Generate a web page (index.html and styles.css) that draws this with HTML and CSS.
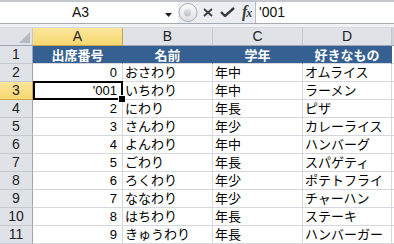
FILE: index.html
```html
<!DOCTYPE html>
<html lang="ja">
<head>
<meta charset="utf-8">
<title>Excel</title>
<link rel="stylesheet" href="styles.css">
</head>
<body>
<div class="app">
  <div class="fbar">
    <div class="namebox">
      <span class="name">A3</span>
      <svg class="dd" width="7" height="4" viewBox="0 0 7 4"><path d="M0 0H7L3.5 4Z" fill="#222"/></svg>
    </div>
    <div class="fbtns">
      <svg class="knob" width="20" height="21" viewBox="0 0 20 21">
        <defs>
          <linearGradient id="kg" x1="0" y1="0" x2="0" y2="1">
            <stop offset="0" stop-color="#fbfbfc"/>
            <stop offset="1" stop-color="#dde0e4"/>
          </linearGradient>
          <linearGradient id="ig" x1="0" y1="0" x2="0" y2="1">
            <stop offset="0" stop-color="#e4e6e9"/>
            <stop offset="1" stop-color="#b9bec5"/>
          </linearGradient>
        </defs>
        <circle cx="10" cy="10.5" r="9" fill="url(#kg)" stroke="#a9aeb5" stroke-width="1"/>
        <ellipse cx="9.5" cy="10.5" rx="3.5" ry="4" fill="url(#ig)"/>
      </svg>
      <svg class="ico" width="10" height="9" viewBox="0 0 10 9"><path d="M1 1L9 8M9 1L1 8" stroke="#3c3c3c" stroke-width="1.8"/></svg>
      <svg class="ico chk" width="15" height="10" viewBox="0 0 15 10"><path d="M1 5L5 9L14 1" fill="none" stroke="#3c3c3c" stroke-width="2.4"/></svg>
      <span class="fx">f<span class="fxx">x</span></span>
    </div>
    <div class="finput">'001</div>
  </div>
  <div class="gap"></div>
  <div class="sheet">
    <div class="corner"></div>
    <div class="ch sel">A</div>
    <div class="ch">B</div>
    <div class="ch">C</div>
    <div class="ch">D</div>
    <div class="ch end"></div>

    <div class="rh">1</div>
    <div class="c hd">出席番号</div>
    <div class="c hd">名前</div>
    <div class="c hd">学年</div>
    <div class="c hd">好きなもの</div>
    <div class="c end"></div>

    <div class="rh">2</div>
    <div class="c num">0</div>
    <div class="c">おさわり</div>
    <div class="c">年中</div>
    <div class="c">オムライス</div>
    <div class="c end"></div>

    <div class="rh sel">3</div>
    <div class="c num active">'001</div>
    <div class="c">いちわり</div>
    <div class="c">年中</div>
    <div class="c">ラーメン</div>
    <div class="c end"></div>

    <div class="rh">4</div>
    <div class="c num">2</div>
    <div class="c">にわり</div>
    <div class="c">年長</div>
    <div class="c">ピザ</div>
    <div class="c end"></div>

    <div class="rh">5</div>
    <div class="c num">3</div>
    <div class="c">さんわり</div>
    <div class="c">年少</div>
    <div class="c">カレーライス</div>
    <div class="c end"></div>

    <div class="rh">6</div>
    <div class="c num">4</div>
    <div class="c">よんわり</div>
    <div class="c">年中</div>
    <div class="c">ハンバーグ</div>
    <div class="c end"></div>

    <div class="rh">7</div>
    <div class="c num">5</div>
    <div class="c">ごわり</div>
    <div class="c">年長</div>
    <div class="c">スパゲティ</div>
    <div class="c end"></div>

    <div class="rh">8</div>
    <div class="c num">6</div>
    <div class="c">ろくわり</div>
    <div class="c">年少</div>
    <div class="c">ポテトフライ</div>
    <div class="c end"></div>

    <div class="rh">9</div>
    <div class="c num">7</div>
    <div class="c">ななわり</div>
    <div class="c">年少</div>
    <div class="c">チャーハン</div>
    <div class="c end"></div>

    <div class="rh">10</div>
    <div class="c num">8</div>
    <div class="c">はちわり</div>
    <div class="c">年長</div>
    <div class="c">ステーキ</div>
    <div class="c end"></div>

    <div class="rh">11</div>
    <div class="c num">9</div>
    <div class="c">きゅうわり</div>
    <div class="c">年長</div>
    <div class="c">ハンバーガー</div>
    <div class="c end"></div>
  </div>
</div>
</body>
</html>
```

FILE: styles.css
```css
* { box-sizing: border-box; }
html, body { margin: 0; padding: 0; background: #fff; }
body {
  font-family: "Liberation Sans", "Noto Sans CJK JP", sans-serif;
  font-size: 13px;
  color: #000;
  width: 394px;
  height: 244px;
  overflow: hidden;
}
.app { width: 394px; }

.fbar {
  display: flex;
  height: 23px;
  border-top: 2px solid #c3c7cd;
  background: #eceef1;
}
.namebox {
  width: 178px;
  background: #fff;
  display: flex;
  align-items: center;
  position: relative;
}
.name {
  position: absolute;
  left: 72px;
  top: 2px;
  font-size: 14px;
  line-height: 16px;
  color: #111;
}
.dd { position: absolute; left: 165px; top: 11px; }
.fbtns {
  width: 77px;
  display: flex;
  align-items: center;
  background: #eceef1;
  position: relative;
}
.knob { margin-left: 0; }
.ico { margin-left: 5px; }
.chk { margin-left: 7px; margin-top: -1px; }
.fx {
  margin-left: 7px;
  font-family: "Liberation Serif", serif;
  font-style: italic;
  font-size: 16px;
  color: #3c3c3c;
  font-weight: bold;
  line-height: 16px;
  letter-spacing: -1px;
}
.fxx { font-size: 12px; }
.finput {
  flex: 1;
  background: #fff;
  border-left: 1px solid #b9bec6;
  padding-left: 3px;
  font-size: 14px;
  line-height: 21px;
  color: #111;
}

.gap {
  height: 5px;
  border-top: 1px solid #a4abb4;
  background: #f1f2f4;
  border-bottom: 1px solid #d6dae0;
}

.sheet {
  display: grid;
  grid-template-columns: 33px 90px 90px 90px 89px 2px;
  grid-auto-rows: 18px;
}
.corner {
  background: #dfe3e8;
  border-right: 1px solid #c4c9d0;
  border-bottom: 1px solid #9ca5b1;
  position: relative;
}
.corner::after {
  content: "";
  position: absolute;
  right: 2px;
  bottom: 2px;
  width: 0;
  height: 0;
  border-left: 11px solid transparent;
  border-bottom: 11px solid #b6bbc2;
}
.ch {
  background: #dfe3e8;
  border-right: 1px solid #c4c9d0;
  border-bottom: 1px solid #9ca5b1;
  text-align: center;
  font-size: 14px;
  line-height: 17px;
  color: #222;
}
.ch.sel {
  background: linear-gradient(#fbe59c, #f8d86f);
  border-right-color: #c8a450;
  border-bottom-color: #c8a450;
}
.ch.end { background: #cfd3d9; border-right: none; }
.rh {
  background: #dfe3e8;
  border-right: 1px solid #9ca5b1;
  border-bottom: 1px solid #c4c9d0;
  text-align: center;
  font-size: 14px;
  line-height: 17px;
  color: #222;
}
.rh.sel {
  background: linear-gradient(#fbe59c, #f8d86f);
  border-right-color: #c8a450;
  border-bottom-color: #c8a450;
}
.c {
  border-right: 1px solid #d4d8de;
  border-bottom: 1px solid #d4d8de;
  padding-left: 2px;
  line-height: 17px;
  white-space: nowrap;
  overflow: hidden;
}
.c.end { background: #fff; border-right: none; padding: 0; }
.c.hd {
  background: #366092;
  border-right-color: #366092;
  color: #fff;
  font-weight: bold;
  text-align: center;
  font-family: "Noto Sans CJK JP", sans-serif;
  padding: 0;
}
.c.num { text-align: right; padding-left: 0; padding-right: 5px; }
.c.active { position: relative; overflow: visible; }
.c.active::before {
  content: "";
  position: absolute;
  top: -1px;
  left: 0;
  right: -1px;
  bottom: -1px;
  border: 2px solid #000;
}
.c.active::after {
  content: "";
  position: absolute;
  right: -3px;
  bottom: -3px;
  width: 6px;
  height: 6px;
  background: #000;
  border-left: 1px solid #fff;
  border-top: 1px solid #fff;
}
```
